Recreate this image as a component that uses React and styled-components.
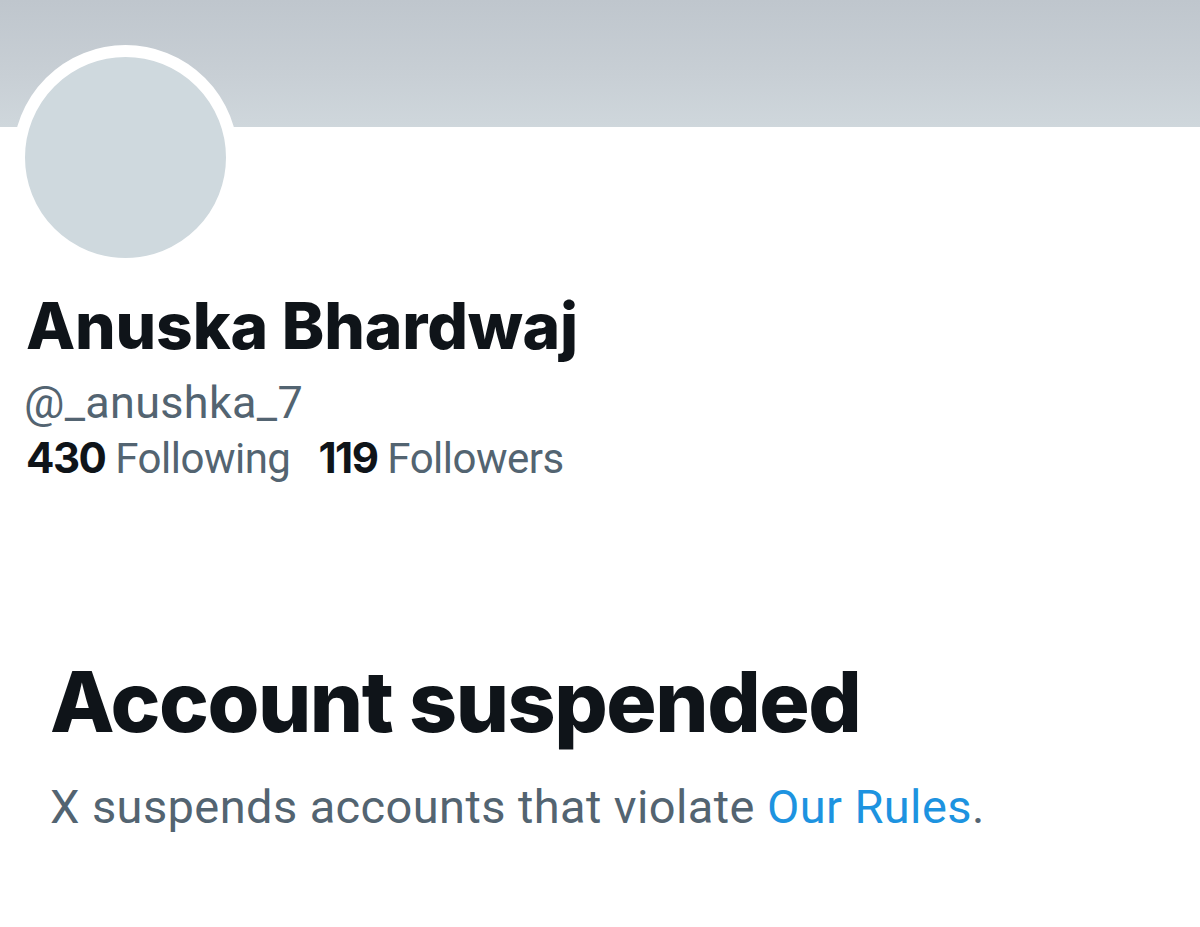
import React from "react"
import styled, { createGlobalStyle } from "styled-components"

const GlobalStyle = createGlobalStyle`
  html, body {
    margin: 0;
    padding: 0;
    background: #ffffff;
  }
  body {
    font-family: Roboto, "Liberation Sans", Arial, sans-serif;
    color: #0f1419;
    -webkit-font-smoothing: antialiased;
  }
`

const Page = styled.div`
  width: 1200px;
  min-height: 927px;
  background: #ffffff;
  overflow: hidden;
`

const Banner = styled.div`
  height: 127px;
  background: linear-gradient(180deg, #bfc6cd 0%, #c8cfd5 60%, #cfd7dc 100%);
`

const Header = styled.div`
  padding: 0 0 0 13px;
`

const Avatar = styled.div`
  width: 201px;
  height: 201px;
  margin-top: -82px;
  border-radius: 50%;
  border: 12px solid #ffffff;
  background: #cfd9de;
`

const Info = styled.div`
  padding: 18px 0 0 26px;
  display: flex;
  flex-direction: column;
`

const Name = styled.h1`
  margin: 0;
  font-family: Inter, Roboto, sans-serif;
  font-size: 64px;
  font-weight: 800;
  line-height: 1.2;
  letter-spacing: -0.15px;
  color: #0f1419;
`

const Handle = styled.div`
  margin-top: 11px;
  margin-left: -2px;
  font-size: 45px;
  line-height: 1.2;
  color: #536471;
  letter-spacing: 0.3px;
`

const Stats = styled.div`
  margin-top: 3px;
  display: flex;
  gap: 28px;
  font-size: 42px;
  line-height: 1.2;
  letter-spacing: -0.5px;
  color: #536471;
`

const Stat = styled.span`
  strong {
    font-family: Inter, Roboto, sans-serif;
    font-weight: 700;
    letter-spacing: -1.5px;
    color: #0f1419;
  }
`

const Notice = styled.section`
  margin-top: 168px;
  padding-left: 50px;
  display: flex;
  flex-direction: column;
`

const Title = styled.h2`
  margin: 0;
  font-family: Inter, Roboto, sans-serif;
  font-size: 84px;
  font-weight: 800;
  line-height: 1.2;
  letter-spacing: -1.5px;
  color: #0f1419;
`

const Message = styled.p`
  margin: 26px 0 0;
  font-size: 47px;
  line-height: 1.2;
  letter-spacing: 0.4px;
  color: #536471;
`

const RulesLink = styled.a`
  color: #1d93e0;
  text-decoration: none;
`

export default function App() {
  return (
    <Page>
      <GlobalStyle />
      <Banner />
      <Header>
        <Avatar />
      </Header>
      <Info>
        <Name>Anuska Bhardwaj</Name>
        <Handle>@_anushka_7</Handle>
        <Stats>
          <Stat>
            <strong>430</strong> Following
          </Stat>
          <Stat>
            <strong>119</strong> Followers
          </Stat>
        </Stats>
      </Info>
      <Notice>
        <Title>Account suspended</Title>
        <Message>
          X suspends accounts that violate <RulesLink href="#">Our Rules</RulesLink>.
        </Message>
      </Notice>
    </Page>
  )
}
